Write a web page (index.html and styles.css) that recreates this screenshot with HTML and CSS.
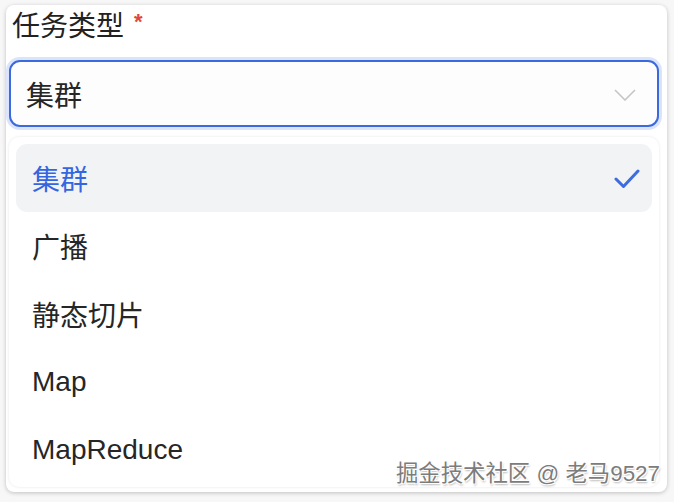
FILE: index.html
```
<!DOCTYPE html>
<html lang="zh">
<head>
<meta charset="utf-8">
<link rel="stylesheet" href="styles.css">
</head>
<body>
<div class="card">
  <div class="label">任务类型<span class="req">*</span></div>
  <div class="select">
    <span class="value">集群</span>
    <svg class="chevron" width="22" height="12" viewBox="0 0 22 12"><path d="M1 1 L11 11 L21 1" fill="none" stroke="#c6c6c6" stroke-width="1.6"/></svg>
  </div>
  <div class="panel">
    <div class="item active">
      <span>集群</span>
      <svg class="check" width="26" height="22" viewBox="0 0 26 22"><path d="M2 11 L9.5 18.5 L24 3" fill="none" stroke="#3d6be0" stroke-width="3" stroke-linecap="round" stroke-linejoin="round"/></svg>
    </div>
    <div class="item"><span>广播</span></div>
    <div class="item"><span>静态切片</span></div>
    <div class="item"><span>Map</span></div>
    <div class="item"><span>MapReduce</span></div>
  </div>
  <div class="watermark">掘金技术社区 @ 老马9527</div>
</div>
</body>
</html>
```

FILE: styles.css
```
html, body {
  margin: 0;
  padding: 0;
}
body {
  width: 674px;
  height: 502px;
  background: #f7f7f7;
  font-family: "Liberation Sans", "Noto Sans CJK SC", sans-serif;
  overflow: hidden;
}
.card {
  position: relative;
  margin: 5px 0 0 6px;
  width: 661px;
  height: 487px;
  background: #ffffff;
  border-radius: 8px;
  box-shadow: 0 1px 4px rgba(0, 0, 0, 0.22);
  padding-top: 2px;
  box-sizing: border-box;
}
.label {
  margin-left: 6px;
  font-size: 28px;
  line-height: 40px;
  color: #222222;
  display: flex;
  align-items: flex-start;
}
.req {
  color: #e0463f;
  font-size: 22px;
  line-height: 30px;
  margin-left: 10px;
  font-weight: bold;
}
.select {
  margin: 13px 0 0 3px;
  width: 650px;
  height: 67px;
  box-sizing: border-box;
  border: 2px solid #3b69de;
  border-radius: 11px;
  box-shadow: 0 0 0 3px #dbe4fb;
  background: #fdfdfd;
  display: flex;
  align-items: center;
  justify-content: space-between;
  padding: 0 21px 0 15px;
}
.value {
  font-size: 28px;
  color: #262626;
}
.chevron {
  margin-top: 2px;
}
.panel {
  margin: 10px 0 0 3px;
  width: 650px;
  height: 350px;
  box-sizing: border-box;
  padding: 7px 7px;
  border-radius: 10px;
  box-shadow: 0 0 3px rgba(0, 0, 0, 0.1);
  background: #ffffff;
  display: flex;
  flex-direction: column;
}
.item {
  height: 68px;
  flex: none;
  display: flex;
  align-items: center;
  justify-content: space-between;
  padding: 0 12px 0 16px;
  border-radius: 11px;
  font-size: 28px;
  color: #262626;
}
.item.active {
  background: #f2f3f5;
  color: #3466e0;
}
.check {
  margin-top: 2px;
}
.watermark {
  position: absolute;
  right: 7px;
  bottom: 5px;
  font-size: 22.4px;
  color: #7c7c7c;
  text-shadow: 1px 1px 0 #ffffff, -1px -1px 0 #ffffff, 1px -1px 0 #ffffff, -1px 1px 0 #ffffff, 1px 2px 2px rgba(0,0,0,0.3);
}
```
